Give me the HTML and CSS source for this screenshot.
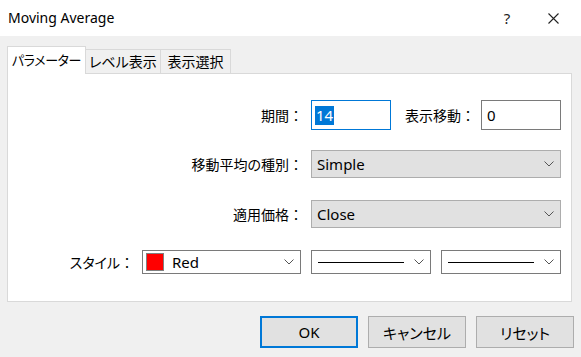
FILE: index.html
```html
<!DOCTYPE html>
<html lang="ja">
<head>
<meta charset="utf-8">
<title>Moving Average</title>
<link rel="stylesheet" href="styles.css">
</head>
<body>
<div class="window">
  <header class="titlebar">
    <span class="title">Moving Average</span>
    <div class="title-btns">
      <span class="tbtn help">?</span>
      <span class="tbtn close"><svg width="11" height="11" viewBox="0 0 11 11"><path d="M0.5 0.5 L10.5 10.5 M10.5 0.5 L0.5 10.5" stroke="#222" stroke-width="1.1" fill="none"/></svg></span>
    </div>
  </header>
  <div class="content">
    <div class="tabs">
      <div class="tab tab1 active">パラメーター</div>
      <div class="tab tab2">レベル表示</div>
      <div class="tab tab3">表示選択</div>
    </div>
    <div class="panel">
      <div class="row row-period">
        <span class="label">期間<span class="colon">：</span></span>
        <div class="field focused"><span class="sel">14</span></div>
        <span class="label label-shift">表示移動<span class="colon">：</span></span>
        <div class="field"><span>0</span></div>
      </div>
      <div class="row row-method">
        <span class="label">移動平均の種別<span class="colon">：</span></span>
        <div class="combo wide"><span>Simple</span><svg class="chev" width="10" height="6" viewBox="0 0 10 6"><path d="M0.5 0.5 L5 5 L9.5 0.5" stroke="#555" stroke-width="1" fill="none"/></svg></div>
      </div>
      <div class="row row-apply">
        <span class="label">適用価格<span class="colon">：</span></span>
        <div class="combo wide"><span>Close</span><svg class="chev" width="10" height="6" viewBox="0 0 10 6"><path d="M0.5 0.5 L5 5 L9.5 0.5" stroke="#555" stroke-width="1" fill="none"/></svg></div>
      </div>
      <div class="row row-style">
        <span class="label">スタイル<span class="colon">：</span></span>
        <div class="combo white color"><span class="swatch-wrap"><span class="swatch"></span><span>Red</span></span><svg class="chev" width="10" height="6" viewBox="0 0 10 6"><path d="M0.5 0.5 L5 5 L9.5 0.5" stroke="#555" stroke-width="1" fill="none"/></svg></div>
        <div class="combo white line"><span class="lineval"></span><svg class="chev" width="10" height="6" viewBox="0 0 10 6"><path d="M0.5 0.5 L5 5 L9.5 0.5" stroke="#555" stroke-width="1" fill="none"/></svg></div>
        <div class="combo white line"><span class="lineval"></span><svg class="chev" width="10" height="6" viewBox="0 0 10 6"><path d="M0.5 0.5 L5 5 L9.5 0.5" stroke="#555" stroke-width="1" fill="none"/></svg></div>
      </div>
    </div>
    <div class="buttons">
      <div class="btn default">OK</div>
      <div class="btn">キャンセル</div>
      <div class="btn">リセット</div>
    </div>
  </div>
</div>
</body>
</html>
```
FILE: styles.css
```css
html, body {
  margin: 0;
  padding: 0;
}
body {
  background: #f0f0f0;
  font-family: "Noto Sans", "Noto Sans CJK JP", sans-serif;
  font-size: 14px;
  color: #000;
}
.window {
  width: 581px;
  height: 357px;
  overflow: hidden;
  background: #f0f0f0;
}
.titlebar {
  height: 36px;
  background: #fff;
  display: flex;
  align-items: center;
  padding-left: 8px;
  padding-right: 5px;
}
.title {
  font-size: 14px;
  line-height: 1;
}
.title-btns {
  margin-left: auto;
  display: flex;
  height: 100%;
}
.tbtn {
  width: 46px;
  display: flex;
  align-items: center;
  justify-content: center;
}
.help {
  font-size: 15px;
  color: #222;
}
.content {
  padding: 0 7px;
}
.tabs {
  margin-top: 10px;
  display: flex;
  align-items: flex-end;
  height: 27px;
}
.tab {
  box-sizing: border-box;
  height: 24px;
  border: 1px solid #d9d9d9;
  border-bottom: none;
  display: flex;
  align-items: center;
  justify-content: center;
  white-space: nowrap;
  font-family: "Noto Sans CJK JP", sans-serif;
  font-feature-settings: "palt";
  font-size: 14px;
  background: #f0f0f0;
  padding-bottom: 1px;
}
.tab2 { width: 75px; border-left: none; }
.tab3 { width: 70px; border-left: none; }
.tab.active {
  width: 79px;
  height: 28px;
  background: #fff;
  position: relative;
  z-index: 1;
  margin-bottom: -1px;
  padding-bottom: 2px;
  font-size: 13px;
  letter-spacing: -0.4px;
}
.panel {
  box-sizing: border-box;
  height: 229px;
  margin-right: 2px;
  background: #fff;
  border: 1px solid #d9d9d9;
  padding: 26px 10px 0 0;
}
.row {
  display: flex;
  justify-content: flex-end;
  align-items: center;
}
.label {
  font-family: "Noto Sans CJK JP", sans-serif;
  font-feature-settings: "palt";
  font-size: 14px;
  margin-right: 8px;
  line-height: 1;
  white-space: nowrap;
}
.colon {
  font-feature-settings: normal;
}
.row-period { height: 30px; margin-bottom: 20px; }
.row-method { height: 28px; margin-bottom: 22px; }
.row-apply { height: 28px; margin-bottom: 22px; }
.row-style { height: 24px; }
.label-shift {
  box-sizing: border-box;
  width: 90px;
  margin-right: 0;
  text-align: right;
  padding-right: 6px;
}
.field {
  box-sizing: border-box;
  width: 80px;
  height: 30px;
  border: 1px solid #7a7a7a;
  background: #fff;
  display: flex;
  align-items: center;
  padding-left: 5px;
  font-size: 15px;
}
.field.focused {
  border-color: #0078d7;
  padding-left: 3px;
}
.sel {
  background: #0078d7;
  color: #fff;
  padding: 0 1px;
  line-height: 19px;
}
.combo {
  box-sizing: border-box;
  display: flex;
  align-items: center;
  justify-content: space-between;
  padding: 0 6px 0 5px;
  font-size: 15px;
}
.combo.wide {
  width: 250px;
  height: 28px;
  background: #e1e1e1;
  border: 1px solid #adadad;
}
.combo.white {
  height: 24px;
  background: #fff;
  border: 1px solid #7a7a7a;
}
.combo.color {
  width: 159px;
  margin-right: 10px;
  padding-left: 3px;
}
.combo.line {
  width: 120px;
  padding-left: 6px;
}
.combo.line + .combo.line {
  margin-left: 10px;
}
.swatch-wrap {
  display: flex;
  align-items: center;
}
.swatch {
  box-sizing: border-box;
  width: 18px;
  height: 18px;
  background: #ff0000;
  border: 1px solid #808080;
  margin-right: 8px;
}
.lineval {
  display: block;
  width: 86px;
  height: 1px;
  background: #000;
}
.chev {
  flex: none;
}
.buttons {
  margin-top: 14px;
  display: flex;
  justify-content: flex-end;
  gap: 10px;
}
.btn {
  box-sizing: border-box;
  width: 98px;
  height: 32px;
  background: #e1e1e1;
  border: 1px solid #adadad;
  display: flex;
  align-items: center;
  justify-content: center;
  font-size: 15px;
  font-family: "Noto Sans", "Noto Sans CJK JP", sans-serif;
  font-feature-settings: "palt";
}
.btn.default {
  border: 2px solid #0078d7;
}
```
